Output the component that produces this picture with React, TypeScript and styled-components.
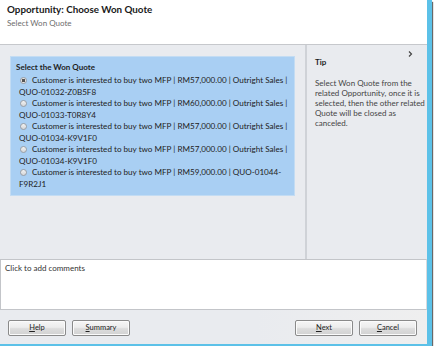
import React from 'react'
import styled, { createGlobalStyle } from 'styled-components'

const GlobalStyle = createGlobalStyle`
  html, body {
    margin: 0;
    padding: 0;
    background: #ffffff;
  }
  body {
    font-family: Lato, "Liberation Sans", sans-serif;
    color: #1e1e1e;
  }
`

const quotes = [
  ['Customer is interested to buy two MFP | RM57,000.00 | Outright Sales |', 'QUO-01032-Z0B5F8'],
  ['Customer is interested to buy two MFP | RM60,000.00 | Outright Sales |', 'QUO-01033-T0R8Y4'],
  ['Customer is interested to buy two MFP | RM57,000.00 | Outright Sales |', 'QUO-01034-K9V1F0'],
  ['Customer is interested to buy two MFP | RM57,000.00 | Outright Sales |', 'QUO-01034-K9V1F0'],
  ['Customer is interested to buy two MFP | RM59,000.00 | QUO-01044-', 'F9R2J1'],
]

const tipLines = [
  'Select Won Quote from the',
  'related Opportunity, once it is',
  'selected, then the other related',
  'Quote will be closed as',
  'canceled.',
]

const App = () => {
  return (
    <>
      <GlobalStyle />
      <Window>
        <Header>
          <Title>Opportunity: Choose Won Quote</Title>
          <Subtitle>Select Won Quote</Subtitle>
        </Header>

        <Body>
          <Main>
            <QuotePanel>
              <PanelTitle>Select the Won Quote</PanelTitle>
              {quotes.map((q, i) => (
                <Option key={i}>
                  <Radio checked={i === 0} />
                  {q[0]}
                  <br />
                  {q[1]}
                </Option>
              ))}
            </QuotePanel>
          </Main>
          <TipPane>
            <Chevron>
              <svg width="5" height="6" viewBox="0 0 5 6">
                <polyline points="1,0.5 3.5,3 1,5.5" fill="none" stroke="#444" strokeWidth="1.2" />
              </svg>
            </Chevron>
            <TipTitle>Tip</TipTitle>
            <TipText>
              {tipLines.map((l, i) => (
                <span key={i}>{l}<br /></span>
              ))}
            </TipText>
          </TipPane>
        </Body>

        <Comments>Click to add comments</Comments>

        <Footer>
          <ButtonGroup>
            <Button><u>H</u>elp</Button>
            <Button><u>S</u>ummary</Button>
          </ButtonGroup>
          <ButtonGroup>
            <Button><u>N</u>ext</Button>
            <Button><u>C</u>ancel</Button>
          </ButtonGroup>
        </Footer>
      </Window>
    </>
  )
}

export default App

const Window = styled.div`
width: 427px;
height: 344px;
display: flex;
flex-direction: column;
border-right: 5px solid #5cc1e8;
border-bottom: 2px solid #5cc1e8;
box-shadow: 1px 2px 1px rgba(40, 40, 40, 0.7);
background: #e9ebef;
`

const Header = styled.div`
height: 45px;
box-sizing: border-box;
background: #ffffff;
border-bottom: 1px solid #c6c8cc;
padding: 3px 7px 0;
`

const Title = styled.div`
font-size: 9.8px;
font-weight: 700;
line-height: 13px;
color: #1a1a1a;
`

const Subtitle = styled.div`
font-size: 8px;
line-height: 12px;
color: #6d6d6d;
margin-top: 1px;
`

const Body = styled.div`
height: 214px;
display: flex;
`

const Main = styled.div`
width: 307px;
padding: 11px 10px 0;
box-sizing: border-box;
border-right: 2px solid #cfd2d7;
`

const QuotePanel = styled.div`
height: 140px;
box-sizing: border-box;
background: #a9cff3;
border: 1px solid #c3dcf3;
padding: 4px 0 0 5px;
`

const PanelTitle = styled.div`
font-size: 8px;
font-weight: 700;
line-height: 13px;
margin-bottom: 1px;
`

const Option = styled.div`
font-size: 8.1px;
line-height: 11.5px;
padding-left: 3px;
color: #222;
white-space: nowrap;
`

const Radio = styled.span<{ checked: boolean }>`
display: inline-block;
width: 7px;
height: 7px;
margin: 0 5px 0 1px;
border-radius: 50%;
border: 1px solid #9a9ea4;
box-sizing: border-box;
vertical-align: -1px;
background: ${({ checked }) =>
  checked
    ? 'radial-gradient(circle, #555 0 1.6px, #e4e4e4 2px)'
    : 'linear-gradient(#f2f2f2, #d4d6d9)'};
`

const TipPane = styled.div`
flex: 1;
position: relative;
padding: 11px 0 0 8px;
`

const Chevron = styled.div`
position: absolute;
top: 6px;
right: 14px;
line-height: 0;

svg {
  display: block;
}
`

const TipTitle = styled.div`
font-size: 8px;
font-weight: 700;
line-height: 12px;
`

const TipText = styled.div`
margin-top: 10px;
font-size: 8px;
line-height: 10px;
color: #444;
white-space: nowrap;
`

const Comments = styled.div`
height: 51px;
box-sizing: border-box;
background: #ffffff;
border: 1px solid #c3c5c9;
border-right-color: #d9dbde;
padding: 3px 4px;
font-size: 8px;
line-height: 11px;
color: #333;
`

const Footer = styled.div`
flex: 1;
display: flex;
align-items: center;
justify-content: space-between;
padding: 1px 10px 0 8px;
background: linear-gradient(90deg, #e9ebef 0%, #e9ebef 60%, #efefef 100%);
`

const ButtonGroup = styled.div`
display: flex;
gap: 6px;
`

const Button = styled.div`
width: 58px;
height: 16px;
box-sizing: border-box;
border: 1px solid #8a8a8a;
border-radius: 2px;
background: linear-gradient(#f6f6f6 0%, #ececec 45%, #dcdcdc 55%, #d2d2d2 100%);
box-shadow: inset 0 0 0 1px #fbfbfb;
display: flex;
align-items: center;
justify-content: center;
font-size: 7.5px;
color: #222;
`
